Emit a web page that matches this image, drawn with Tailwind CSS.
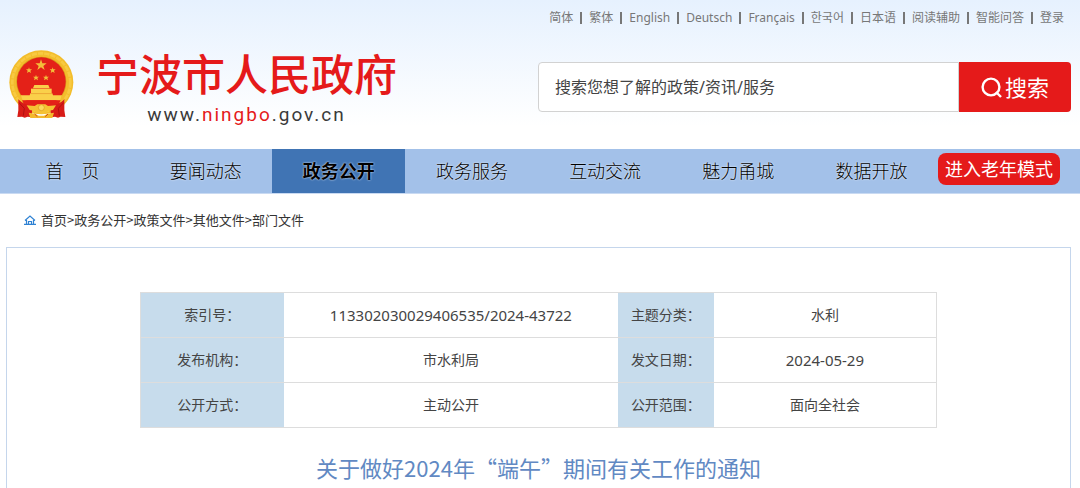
<!DOCTYPE html>
<html lang="zh-CN">
<head>
    <meta charset="UTF-8">
    <meta name="viewport" content="width=device-width, initial-scale=1.0">
    <title>关于做好2024年“端午”期间有关工作的通知</title>
    <script src="https://cdn.jsdelivr.net/npm/@tailwindcss/browser@4"></script>
</head>
<body class="bg-white font-['Noto_Sans','Noto_Sans_CJK_SC','Noto_Sans_CJK_KR',sans-serif] text-[#444]">

    <header class="bg-linear-to-b from-[#e6f1fe] to-white to-85% pb-[22px]">
        <!-- Languages and account -->
        <nav aria-label="语言" class="flex justify-end items-center gap-[7px] h-[35px] pr-4 text-[12px] leading-5 text-[#777]">
            <a href="#">简体</a>
            <span class="w-[2px] h-3 bg-[#777]"></span>
            <a href="#">繁体</a>
            <span class="w-[2px] h-3 bg-[#777]"></span>
            <a href="#">English</a>
            <span class="w-[2px] h-3 bg-[#777]"></span>
            <a href="#">Deutsch</a>
            <span class="w-[2px] h-3 bg-[#777]"></span>
            <a href="#">Français</a>
            <span class="w-[2px] h-3 bg-[#777]"></span>
            <a href="#" lang="ko">한국어</a>
            <span class="w-[2px] h-3 bg-[#777]"></span>
            <a href="#">日本语</a>
            <span class="w-[2px] h-3 bg-[#777]"></span>
            <a href="#">阅读辅助</a>
            <span class="w-[2px] h-3 bg-[#777]"></span>
            <a href="#">智能问答</a>
            <span class="w-[2px] h-3 bg-[#777]"></span>
            <a href="#">登录</a>
        </nav>

        <div class="flex items-center justify-between px-[9px] pt-3">
            <a href="#" class="flex items-center gap-[22px] h-20">
                <svg class="w-[65px] h-[70px] shrink-0 mb-1" viewBox="27 14 195 210" aria-hidden="true">
                    <circle cx="124" cy="111" r="96" fill="#f3bd2c"/>
                    <circle cx="124" cy="111" r="87" fill="none" stroke="#f8ca42" stroke-width="8" stroke-dasharray="16 3"/>
                    <circle cx="124" cy="109" r="75" fill="#d99a1c"/>
                    <circle cx="124" cy="109" r="73" fill="#e42118"/>
                    <g fill="#f3bf3a">
                        <path d="M123 42l4 12h13l-10 8 4 12-11-8-11 8 4-12-10-8h13z"/>
                        <path d="M87 66l2 6h7l-5 4 2 7-6-4-6 4 2-7-5-4h7z"/>
                        <path d="M158 66l2 6h7l-5 4 2 7-6-4-6 4 2-7-5-4h7z"/>
                        <path d="M108 88l2 6h7l-5 4 2 7-6-4-6 4 2-7-5-4h7z"/>
                        <path d="M138 88l2 6h7l-5 4 2 7-6-4-6 4 2-7-5-4h7z"/>
                    </g>
                    <g fill="#fad04a">
                        <path d="M103 119h42l4 10h-50z"/>
                        <path d="M93 130h62v14h-62z"/>
                        <path d="M91 144h66l2 6h27l-6 15H68l-6-15h27z"/>
                    </g>
                    <path d="M93 145h62" stroke="#d99a1c" stroke-width="1"/>
                    <path d="M66 165h116l-10 20H76z" fill="#e42118"/>
                    <path d="M55 162c10 11 25 18 42 20l-2 34-12-2-9 3-8-3-14 1 3-20z" fill="#d81b17"/>
                    <path d="M193 162c-10 11-25 18-42 20l2 34 12-2 9 3 8-3 14 1-3-20z" fill="#d81b17"/>
                    <path d="M57 172l16 17-3 22M191 172l-16 17 3 22" fill="none" stroke="#b01012" stroke-width="3"/>
                    <path d="M80 180l24 2 8-5h24l8 5 24-2-9 14-14 2-10 10h-22l-10-10-14-2z" fill="#f5c234"/>
                    <circle cx="124" cy="187" r="9" fill="#fbd95c" stroke="#d99a1c" stroke-width="2"/>
                    <path d="M86 202l20 3 10 6h16l10-6 20-3-5 16H91z" fill="#f3b92b"/>
                    <path d="M104 206l8 8M144 206l-8 8" stroke="#d2491a" stroke-width="3"/>
                </svg>
                <span class="flex flex-col gap-[6px]">
                    <span class="text-[43px] leading-[50px] font-medium text-[#e51a1a] font-['Noto_Sans_CJK_SC',sans-serif]">宁波市人民政府</span>
                    <span class="text-center text-[19px] leading-6 tracking-[2px] font-[Roboto,sans-serif] text-[#3a3a3a]">www.<span class="text-[#e51a1a]">ningbo</span>.gov.cn</span>
                </span>
            </a>

            <form class="flex w-[51%] max-w-[533px] h-[50px]" onsubmit="return false">
                <input type="text" aria-label="搜索" placeholder="搜索您想了解的政策/资讯/服务"
                       class="flex-1 min-w-0 px-4 text-base bg-white border border-[#d2d2d2] rounded-l-[4px] placeholder:text-[#444] focus:outline-none">
                <button type="submit" class="flex items-center justify-center gap-[3px] w-28 bg-[#e51a1a] text-white text-[22px] rounded-r-[4px]">
                    <svg class="w-[21px] h-[21px]" viewBox="0 0 21 21" fill="none" stroke="currentColor" stroke-width="2.4" aria-hidden="true">
                        <circle cx="10" cy="10" r="8.4"/>
                        <path d="M15 15l5 5"/>
                    </svg>
                    搜索
                </button>
            </form>
        </div>
    </header>

    <!-- Main navigation -->
    <nav aria-label="主导航" class="flex bg-[#a3c1e9] border-b border-[#c9daf2] pl-[6px] pr-5">
        <ul class="flex-1 grid grid-cols-7 text-center text-[18px] leading-[44px] font-light text-black text-shadow-[0_0_2px_#fff]">
            <li><a href="#" class="block">首　页</a></li>
            <li><a href="#" class="block">要闻动态</a></li>
            <li><a href="#" class="block bg-[#4074b4] font-bold">政务公开</a></li>
            <li><a href="#" class="block">政务服务</a></li>
            <li><a href="#" class="block">互动交流</a></li>
            <li><a href="#" class="block">魅力甬城</a></li>
            <li><a href="#" class="block">数据开放</a></li>
        </ul>
        <button type="button" class="mt-1 h-8 px-[7px] rounded-lg bg-[#e51a1a] text-white text-[18px] leading-8">进入老年模式</button>
    </nav>

    <nav aria-label="当前位置" class="flex items-center h-[53px] pb-[2px] pl-6 text-[13px] text-[#333] font-['Noto_Sans_CJK_SC',sans-serif]">
        <svg class="w-3 h-[10px] mr-[5px]" viewBox="0 0 12 10" fill="none" stroke="#2f82d3" stroke-width="1.2" aria-hidden="true">
            <path d="M1 5.5L6 1l5 4.5M2.5 5v4M9.5 5v4M0 9.3h12M4.5 9V6.5h3V9"/>
        </svg>
        <a href="#">首页</a>&gt;<a href="#">政务公开</a>&gt;<a href="#">政策文件</a>&gt;<a href="#">其他文件</a>&gt;<a href="#">部门文件</a>
    </nav>

    <main class="ml-[6px] mr-[9px] border border-b-0 border-[#c5d6ec] pt-11 pb-[6px]">
        <table class="w-3/4 mx-auto table-fixed border-collapse border border-[#ddd] text-center text-[14px] leading-[22px]">
            <colgroup>
                <col class="w-[18%]">
                <col class="w-[42%]">
                <col class="w-[12%]">
                <col class="w-[28%]">
            </colgroup>
            <tbody>
                <tr class="border-b border-[#ddd]">
                    <th scope="row" class="bg-[#c7dcec] font-normal">索引号：</th>
                    <td class="py-[11px] text-[15px]">113302030029406535/2024-43722</td>
                    <th scope="row" class="bg-[#c7dcec] font-normal">主题分类：</th>
                    <td>水利</td>
                </tr>
                <tr class="border-b border-[#ddd]">
                    <th scope="row" class="bg-[#c7dcec] font-normal">发布机构：</th>
                    <td class="py-[11px]">市水利局</td>
                    <th scope="row" class="bg-[#c7dcec] font-normal">发文日期：</th>
                    <td class="text-[15px]">2024-05-29</td>
                </tr>
                <tr>
                    <th scope="row" class="bg-[#c7dcec] font-normal">公开方式：</th>
                    <td class="py-[11px]">主动公开</td>
                    <th scope="row" class="bg-[#c7dcec] font-normal">公开范围：</th>
                    <td>面向全社会</td>
                </tr>
            </tbody>
        </table>
        <h1 class="mt-6 text-center text-[22px] leading-[30px] text-[#6189c3] font-['Noto_Sans_CJK_SC',sans-serif]">关于做好2024年“端午”期间有关工作的通知</h1>
    </main>

</body>
</html>
